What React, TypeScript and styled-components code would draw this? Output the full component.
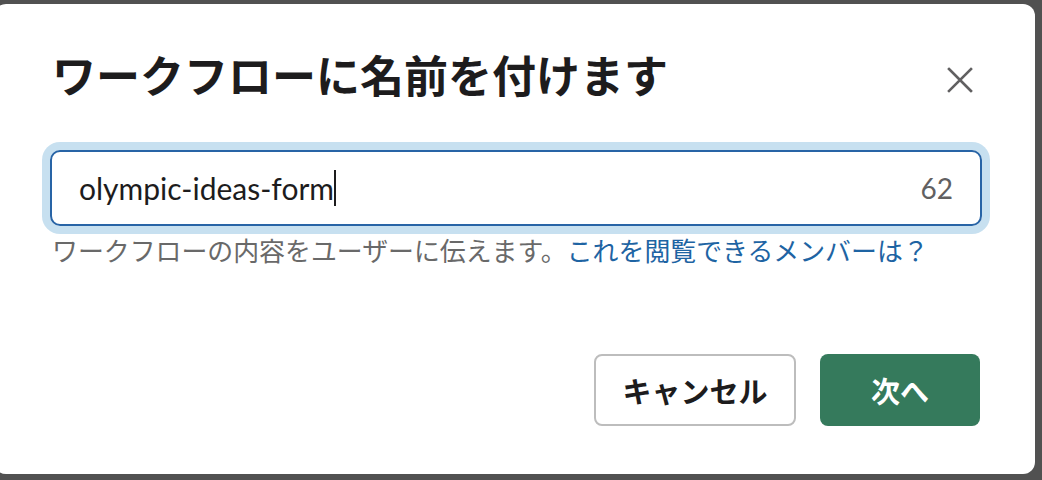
import React from "react"
import styled, { createGlobalStyle } from "styled-components"

const GlobalStyle = createGlobalStyle`
  html, body {
    margin: 0;
    padding: 0;
    background: #515151;
    overflow: hidden;
  }
  body {
    font-family: "Lato", "Noto Sans CJK JP", sans-serif;
  }
`

const Backdrop = styled.div`
  width: 1042px;
  height: 480px;
  padding-top: 4px;
  box-sizing: border-box;
`

const Card = styled.div`
  margin-left: -6px;
  width: 1041px;
  height: 470px;
  box-sizing: border-box;
  background: #ffffff;
  border-radius: 12px;
  padding: 44px 53px 48px 56px;
  display: flex;
  flex-direction: column;
`

const Header = styled.div`
  display: flex;
  align-items: center;
  justify-content: space-between;
`

const Title = styled.h1`
  margin: 0;
  font-family: "Noto Sans CJK JP", sans-serif;
  font-size: 44px;
  font-weight: 700;
  line-height: 53px;
  color: #1d1c1d;
  padding-left: 2px;
`

const CloseButton = styled.button`
  width: 40px;
  height: 40px;
  margin-right: 2px;
  margin-top: 10px;
  border: none;
  background: none;
  padding: 0;
  display: flex;
  align-items: center;
  justify-content: center;
  color: #616061;
`

const Field = styled.div`
  margin-top: 49px;
  height: 76px;
  box-sizing: border-box;
  border: 2px solid #2864a6;
  border-radius: 10px;
  box-shadow: 0 0 0 8px #c7e0f0;
  display: flex;
  align-items: center;
  padding: 0 27px 0 27px;
  font-family: "Lato", sans-serif;
  font-size: 30px;
  color: #1d1c1d;
`

const Value = styled.span`
  display: flex;
  align-items: center;
  flex: 1;
`

const Caret = styled.span`
  display: inline-block;
  width: 2px;
  height: 36px;
  background: #1d1c1d;
  margin-left: 0;
`

const Counter = styled.span`
  color: #616061;
  font-size: 28px;
`

const Hint = styled.p`
  margin: 6px 0 0 2px;
  font-family: "Noto Sans CJK JP", sans-serif;
  font-size: 25.9px;
  line-height: 36px;
  color: #696969;
`

const HintLink = styled.a`
  color: #1e64a3;
  text-decoration: none;
`

const Footer = styled.div`
  margin-top: auto;
  padding-right: 2px;
  display: flex;
  justify-content: flex-end;
  gap: 24px;
`

const Button = styled.button<{ $primary?: boolean }>`
  height: 72px;
  box-sizing: border-box;
  border-radius: 8px;
  font-family: "Noto Sans CJK JP", sans-serif;
  font-size: 29px;
  font-weight: 700;
  padding: 0;
  display: flex;
  align-items: center;
  justify-content: center;
  width: ${(p) => (p.$primary ? "160px" : "202px")};
  background: ${(p) => (p.$primary ? "#357a5c" : "#ffffff")};
  color: ${(p) => (p.$primary ? "#ffffff" : "#1d1c1d")};
  border: ${(p) => (p.$primary ? "none" : "2px solid #bdbdbd")};
`

const CloseIcon = () => (
  <svg width="26" height="26" viewBox="0 0 26 26" fill="none">
    <path
      d="M2 2L24 24M24 2L2 24"
      stroke="currentColor"
      strokeWidth="2.6"
      strokeLinecap="square"
    />
  </svg>
)

export default function App() {
  return (
    <>
      <GlobalStyle />
      <Backdrop>
        <Card>
          <Header>
            <Title>ワークフローに名前を付けます</Title>
            <CloseButton aria-label="閉じる">
              <CloseIcon />
            </CloseButton>
          </Header>
          <Field>
            <Value>
              olympic-ideas-form
              <Caret />
            </Value>
            <Counter>62</Counter>
          </Field>
          <Hint>
            ワークフローの内容をユーザーに伝えます。
            <HintLink href="#">これを閲覧できるメンバーは？</HintLink>
          </Hint>
          <Footer>
            <Button>キャンセル</Button>
            <Button $primary>次へ</Button>
          </Footer>
        </Card>
      </Backdrop>
    </>
  )
}
